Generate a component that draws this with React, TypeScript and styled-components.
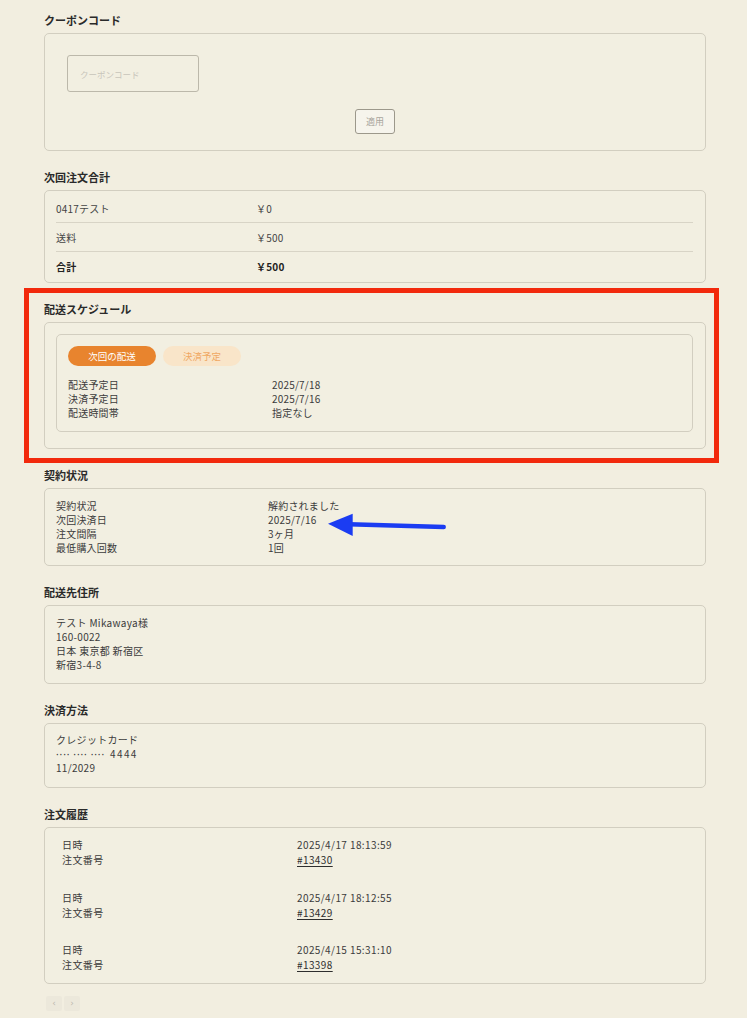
import React from "react";
import styled, { createGlobalStyle } from "styled-components";

const Global = createGlobalStyle`
  html, body { margin: 0; padding: 0; background: #f2eee0; }
  body {
    font-family: "Noto Sans CJK JP", "Noto Sans", sans-serif;
    color: #3a3a3a;
    font-size: 10px;
  }
  * { box-sizing: border-box; }
`;

const Page = styled.div`
  width: 747px;
  min-height: 1018px;
  padding: 12px 41px 0 44px;
  background: #f2eee0;
`;

const Section = styled.section`
  position: relative;
  display: flex;
  flex-direction: column;
  gap: 5px;
  margin-bottom: 18px;
`;

const Title = styled.h2`
  margin: 0;
  font-size: 11px;
  line-height: 16px;
  font-weight: 700;
  color: #2a2a2a;
`;

const Card = styled.div<{ $pad?: string }>`
  position: relative;
  border: 1px solid #d2cec0;
  border-radius: 5px;
  padding: ${(p) => p.$pad || "10px 11px"};
  background: #f2efe1;
`;

const CouponInput = styled.div`
  width: 132px;
  height: 37px;
  border: 1px solid #bcb8aa;
  border-radius: 3px;
  display: flex;
  align-items: center;
  padding-left: 12px;
  font-size: 8.5px;
  color: #c8c5bb;
`;

const ButtonRow = styled.div`
  display: flex;
  justify-content: center;
  margin-top: 17px;
`;

const ApplyButton = styled.button`
  width: 40px;
  height: 25px;
  border: 1px solid #9c988b;
  border-radius: 3px;
  background: #f6f4ec;
  color: #a8a59c;
  font-family: inherit;
  font-size: 9px;
  padding: 0;
`;

const TotalRow = styled.div<{ $bold?: boolean; $last?: boolean }>`
  display: grid;
  grid-template-columns: 200px 1fr;
  height: 29px;
  align-items: center;
  border-bottom: ${(p) => (p.$last ? "none" : "1px solid #d8d4c6")};
  font-weight: ${(p) => (p.$bold ? 700 : 400)};
  color: ${(p) => (p.$bold ? "#222" : "#444")};
  letter-spacing: 0.2px;
`;

const InnerCard = styled.div`
  border: 1px solid #d2cec0;
  border-radius: 5px;
  padding: 11px 11px 11px;
`;

const Pills = styled.div`
  display: flex;
  gap: 7px;
  margin-bottom: 12px;
`;

const Pill = styled.div<{ $active?: boolean; $w: number }>`
  width: ${(p) => p.$w}px;
  height: 20px;
  border-radius: 10px;
  display: flex;
  align-items: center;
  justify-content: center;
  font-size: 9.5px;
  background: ${(p) => (p.$active ? "#e8842e" : "#f9e5c9")};
  color: ${(p) => (p.$active ? "#fff" : "#f0a863")};
`;

const InfoGrid = styled.div<{ $col: number }>`
  display: grid;
  grid-template-columns: ${(p) => p.$col}px 1fr;
  line-height: 14px;
  color: #3c3c3c;
  letter-spacing: 0.2px;
`;

const Lines = styled.div`
  line-height: 14px;
  color: #3c3c3c;
  letter-spacing: 0.3px;
`;

const Dots = styled.span`
  font-family: "Noto Sans", sans-serif;
  letter-spacing: 0.9px;
  margin-right: 3px;
  color: #3c3c3c;
`;

const CardDigits = styled.span`
  letter-spacing: 1.4px;
  color: #3c3c3c;
  margin-left: 2px;
`;

const HistoryList = styled.div`
  display: flex;
  flex-direction: column;
  gap: 22.5px;
`;

const HistoryEntry = styled.div`
  display: grid;
  grid-template-columns: 235px 1fr;
  line-height: 15px;
  padding-left: 6px;
  color: #3c3c3c;
  letter-spacing: 0.4px;
`;

const OrderLink = styled.a`
  color: #2e2e2e;
  text-decoration: underline;
  text-underline-offset: 2px;
`;

const Pager = styled.div`
  display: flex;
  gap: 2px;
  margin-top: -6px;
  padding-left: 2px;
`;

const PageBtn = styled.button`
  width: 16px;
  height: 15px;
  border: none;
  border-radius: 2px;
  background: #ece8db;
  color: #bcb9af;
  font-size: 9px;
  line-height: 15px;
  padding: 0;
  font-family: "DejaVu Sans", sans-serif;
`;

const Highlight = styled.div`
  position: absolute;
  top: -13px;
  left: -20px;
  right: -13px;
  bottom: -14px;
  border: 5px solid #f2290c;
  pointer-events: none;
`;

const Arrow = styled.svg`
  position: absolute;
  left: 280px;
  top: 20px;
  overflow: visible;
`;

const totals = [
  { label: "0417テスト", value: "￥0" },
  { label: "送料", value: "￥500" },
  { label: "合計", value: "￥500", bold: true },
];

const history = [
  { date: "2025/4/17 18:13:59", no: "#13430" },
  { date: "2025/4/17 18:12:55", no: "#13429" },
  { date: "2025/4/15 15:31:10", no: "#13398" },
];

export default function App() {
  return (
    <Page>
      <Global />
      <Section>
        <Title>クーポンコード</Title>
        <Card $pad="21px 22px 16px">
          <CouponInput>クーポンコード</CouponInput>
          <ButtonRow>
            <ApplyButton>適用</ApplyButton>
          </ButtonRow>
        </Card>
      </Section>

      <Section>
        <Title>次回注文合計</Title>
        <Card $pad="3px 12px 1px 11px">
          {totals.map((t, i) => (
            <TotalRow key={t.label} $bold={t.bold} $last={i === totals.length - 1}>
              <span>{t.label}</span>
              <span>{t.value}</span>
            </TotalRow>
          ))}
        </Card>
      </Section>

      <Section>
        <Highlight />
        <Title>配送スケジュール</Title>
        <Card $pad="11px 12px 16px 11px">
          <InnerCard>
            <Pills>
              <Pill $active $w={88}>次回の配送</Pill>
              <Pill $w={78}>決済予定</Pill>
            </Pills>
            <InfoGrid $col={204}>
              <span>配送予定日</span>
              <span>2025/7/18</span>
              <span>決済予定日</span>
              <span>2025/7/16</span>
              <span>配送時間帯</span>
              <span>指定なし</span>
            </InfoGrid>
          </InnerCard>
        </Card>
      </Section>

      <Section>
        <Title>契約状況</Title>
        <Card $pad="10px 11px 10px">
          <InfoGrid $col={212}>
            <span>契約状況</span>
            <span>解約されました</span>
            <span>次回決済日</span>
            <span>2025/7/16</span>
            <span>注文間隔</span>
            <span>3ヶ月</span>
            <span>最低購入回数</span>
            <span>1回</span>
          </InfoGrid>
          <Arrow width="124" height="32" viewBox="0 0 124 32">
            <line x1="24" y1="15.3" x2="118.7" y2="18" stroke="#1b3cf2" strokeWidth="4.5" strokeLinecap="round" />
            <polygon points="3,14.7 27.7,4.7 27.7,27" fill="#1b3cf2" />
          </Arrow>
        </Card>
      </Section>

      <Section>
        <Title>配送先住所</Title>
        <Card $pad="10px 11px 11px">
          <Lines>
            <div>テスト Mikawaya様</div>
            <div>160-0022</div>
            <div>日本 東京都 新宿区</div>
            <div>新宿3-4-8</div>
          </Lines>
        </Card>
      </Section>

      <Section>
        <Title>決済方法</Title>
        <Card $pad="9px 11px 12px">
          <Lines>
            <div>クレジットカード</div>
            <div>
              <Dots>····</Dots>
              <Dots>····</Dots>
              <Dots>····</Dots>
              <CardDigits>4444</CardDigits>
            </div>
            <div>11/2029</div>
          </Lines>
        </Card>
      </Section>

      <Section>
        <Title>注文履歴</Title>
        <Card $pad="9px 11px 11px">
          <HistoryList>
            {history.map((h) => (
              <HistoryEntry key={h.no}>
                <span>日時</span>
                <span>{h.date}</span>
                <span>注文番号</span>
                <span>
                  <OrderLink href="#">{h.no}</OrderLink>
                </span>
              </HistoryEntry>
            ))}
          </HistoryList>
        </Card>
      </Section>

      <Pager>
        <PageBtn>‹</PageBtn>
        <PageBtn>›</PageBtn>
      </Pager>
    </Page>
  );
}
